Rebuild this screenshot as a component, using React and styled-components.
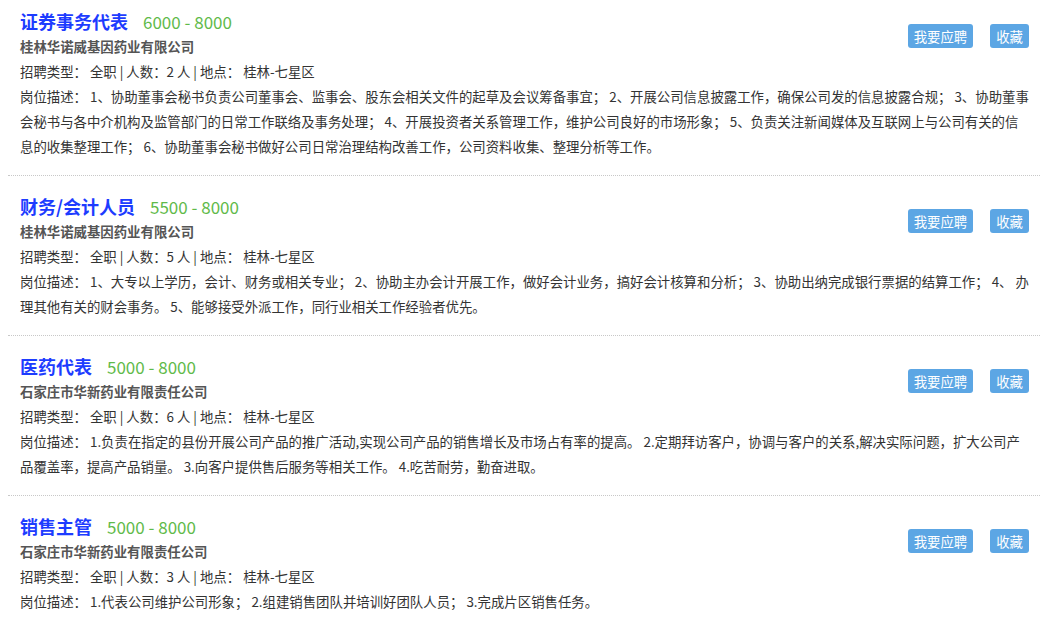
import React from 'react'
import styled, { createGlobalStyle } from 'styled-components'

const GlobalStyle = createGlobalStyle`
    body {
        margin: 0;
        background: #fff;
        font-family: "Microsoft YaHei", "Noto Sans CJK SC", sans-serif;
        color: #333;
    }
`

const List = styled.div`
    margin: 0 10px 0 8px;
`
const Item = styled.div`
    padding: 17px 11px 16px 12px;
    border-top: 1px dotted #c8c8c8;
    &:first-child {
        padding-top: 8px;
        border-top: none;
    }
`
const Head = styled.div`
    display: flex;
    justify-content: space-between;
    align-items: flex-start;
`
const Info = styled.div`
    display: flex;
    flex-direction: column;
`
const TitleRow = styled.div`
    display: flex;
    align-items: baseline;
    height: 26px;
    line-height: 26px;
`
const Title = styled.span`
    font-size: 18px;
    font-weight: bold;
    color: #1d3cff;
`
const Salary = styled.span`
    margin-left: 15px;
    font-size: 17px;
    color: #5fba4a;
`
const Line = styled.div`
    font-size: 13.4px;
    line-height: 25px;
    color: ${props => props.$muted ? '#555' : '#333'};
    font-weight: ${props => props.$bold ? 'bold' : 'normal'};
`
const Actions = styled.div`
    display: flex;
    gap: 17px;
    margin-top: 16px;
`
const Button = styled.button`
    height: 24px;
    padding: 0 6px;
    border: none;
    border-radius: 3px;
    background: #5ca6e4;
    color: #fff;
    font-family: inherit;
    font-size: 13.4px;
    cursor: pointer;
`

const jobs = [
    {
        title: '证券事务代表',
        salary: '6000 - 8000',
        company: '桂林华诺威基因药业有限公司',
        count: 2,
        desc: '1、协助董事会秘书负责公司董事会、监事会、股东会相关文件的起草及会议筹备事宜； 2、开展公司信息披露工作，确保公司发的信息披露合规； 3、协助董事会秘书与各中介机构及监管部门的日常工作联络及事务处理； 4、开展投资者关系管理工作，维护公司良好的市场形象； 5、负责关注新闻媒体及互联网上与公司有关的信息的收集整理工作； 6、协助董事会秘书做好公司日常治理结构改善工作，公司资料收集、整理分析等工作。'
    },
    {
        title: '财务/会计人员',
        salary: '5500 - 8000',
        company: '桂林华诺威基因药业有限公司',
        count: 5,
        desc: '1、大专以上学历，会计、财务或相关专业； 2、协助主办会计开展工作，做好会计业务，搞好会计核算和分析； 3、协助出纳完成银行票据的结算工作； 4、 办理其他有关的财会事务。 5、能够接受外派工作，同行业相关工作经验者优先。'
    },
    {
        title: '医药代表',
        salary: '5000 - 8000',
        company: '石家庄市华新药业有限责任公司',
        count: 6,
        desc: '1.负责在指定的县份开展公司产品的推广活动,实现公司产品的销售增长及市场占有率的提高。 2.定期拜访客户，协调与客户的关系,解决实际问题，扩大公司产品覆盖率，提高产品销量。 3.向客户提供售后服务等相关工作。 4.吃苦耐劳，勤奋进取。'
    },
    {
        title: '销售主管',
        salary: '5000 - 8000',
        company: '石家庄市华新药业有限责任公司',
        count: 3,
        desc: '1.代表公司维护公司形象； 2.组建销售团队并培训好团队人员； 3.完成片区销售任务。'
    }
]

const App = () => {
  return (
    <>
      <GlobalStyle />
      <List>
        {jobs.map((job, index) => (
            <Item key={index}>
                <Head>
                    <Info>
                        <TitleRow>
                            <Title>{job.title}</Title>
                            <Salary>{job.salary}</Salary>
                        </TitleRow>
                        <Line $bold $muted>{job.company}</Line>
                        <Line>{`招聘类型： 全职 | 人数：${job.count} 人 | 地点： 桂林-七星区`}</Line>
                    </Info>
                    <Actions>
                        <Button>我要应聘</Button>
                        <Button>收藏</Button>
                    </Actions>
                </Head>
                <Line>{`岗位描述：  ${job.desc}`}</Line>
            </Item>
        ))}
      </List>
    </>
  )
}

export default App
